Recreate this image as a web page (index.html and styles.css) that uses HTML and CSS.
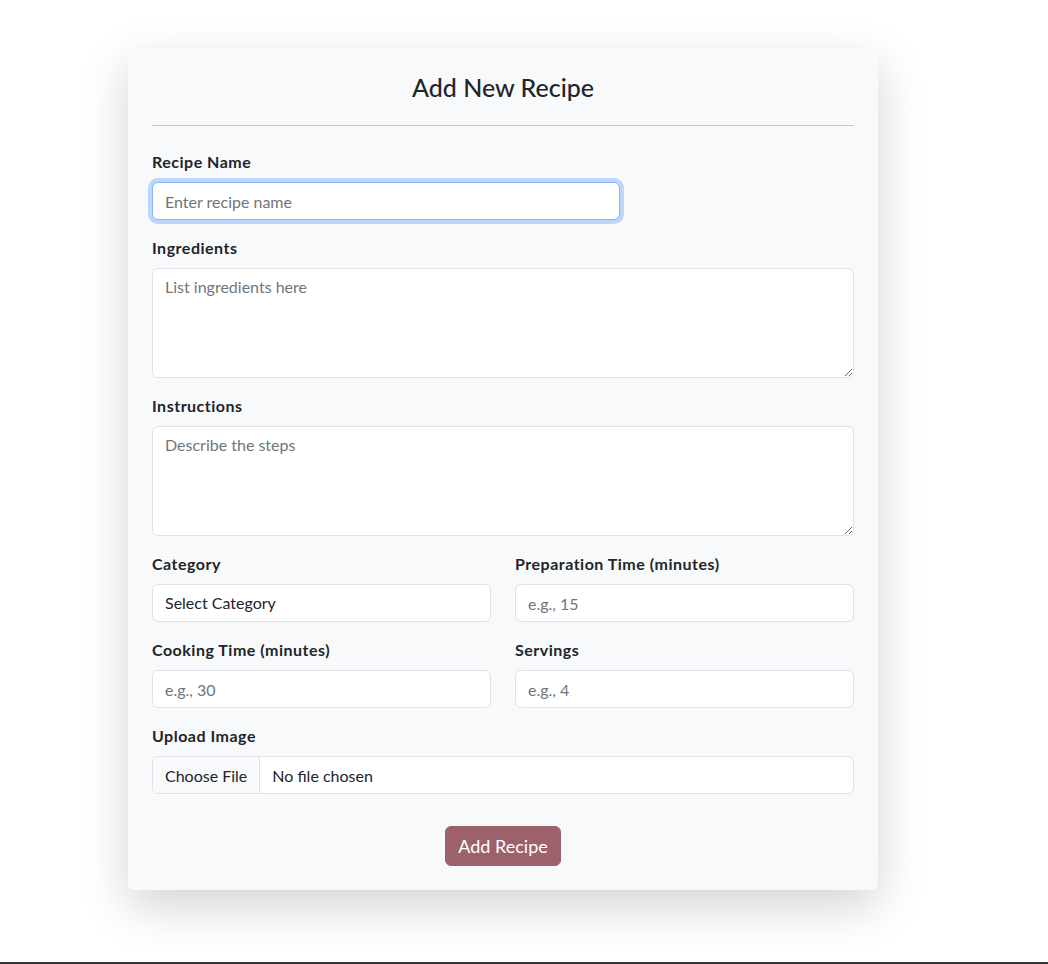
FILE: index.html
```html
<!DOCTYPE html>
<html lang="en">
<head>
<meta charset="utf-8">
<title>Add New Recipe</title>
<link rel="stylesheet" href="styles.css">
</head>
<body>
<main class="page">
  <form class="card">
    <h3 class="card-title">Add New Recipe</h3>
    <hr class="divider">
    <div class="group">
      <label class="label" for="name">Recipe Name</label>
      <input class="control control-focus control-narrow" id="name" type="text" placeholder="Enter recipe name" autofocus>
    </div>
    <div class="group">
      <label class="label" for="ingredients">Ingredients</label>
      <textarea class="control area" id="ingredients" rows="4" placeholder="List ingredients here"></textarea>
    </div>
    <div class="group">
      <label class="label" for="instructions">Instructions</label>
      <textarea class="control area" id="instructions" rows="4" placeholder="Describe the steps"></textarea>
    </div>
    <div class="row">
      <div class="group">
        <label class="label" for="category">Category</label>
        <select class="control select" id="category">
          <option>Select Category</option>
          <option>Breakfast</option>
          <option>Lunch</option>
          <option>Dinner</option>
          <option>Dessert</option>
        </select>
      </div>
      <div class="group">
        <label class="label" for="prep">Preparation Time (minutes)</label>
        <input class="control" id="prep" type="number" placeholder="e.g., 15">
      </div>
    </div>
    <div class="row">
      <div class="group">
        <label class="label" for="cook">Cooking Time (minutes)</label>
        <input class="control" id="cook" type="number" placeholder="e.g., 30">
      </div>
      <div class="group">
        <label class="label" for="servings">Servings</label>
        <input class="control" id="servings" type="number" placeholder="e.g., 4">
      </div>
    </div>
    <div class="group">
      <label class="label" for="image">Upload Image</label>
      <input class="control file" id="image" type="file">
    </div>
    <div class="actions">
      <button class="btn" type="submit">Add Recipe</button>
    </div>
  </form>
</main>
<footer class="footer"></footer>
</body>
</html>
```
FILE: styles.css
```css
* { box-sizing: border-box; }

html, body {
  margin: 0;
  padding: 0;
  background: #ffffff;
  font-family: "Lato", "Noto Sans", sans-serif;
  font-size: 16px;
  line-height: 1.5;
  color: #212529;
}

.page {
  padding-top: 48px;
  padding-bottom: 72px;
}

.card {
  width: 750px;
  margin-left: 128px;
  padding: 24px;
  background: #f8f9fa;
  border-radius: 6px;
  box-shadow: 0 16px 48px rgba(0, 0, 0, 0.175);
}

.card-title {
  margin: 0 0 8px;
  padding-top: 2px;
  font-size: 25px;
  font-weight: 500;
  line-height: 27px;
  text-align: center;
  color: #212529;
}

.divider {
  margin: 24px 0;
  border: 0;
  border-top: 1px solid #c5c6c8;
  height: 0;
}

.group {
  margin-bottom: 16px;
}

.label {
  display: block;
  margin-bottom: 8px;
  font-weight: 700;
  line-height: 24px;
  letter-spacing: 0.5px;
}

.control {
  display: block;
  width: 100%;
  height: 38px;
  padding: 6px 12px;
  font-family: inherit;
  font-size: 16px;
  line-height: 24px;
  color: #212529;
  background: #ffffff;
  border: 1px solid #dee2e6;
  border-radius: 6px;
  outline: none;
}

.control::placeholder {
  color: #6f757b;
  opacity: 1;
}

.control-narrow {
  width: 66.6667%;
}

.control-focus,
.control:focus {
  border-color: #86b7fe;
  box-shadow: 0 0 0 4px rgba(13, 110, 253, 0.25);
}

.area {
  height: 110px;
  resize: vertical;
}

.select {
  appearance: none;
  -webkit-appearance: none;
}

input[type=number]::-webkit-inner-spin-button,
input[type=number]::-webkit-outer-spin-button {
  -webkit-appearance: none;
  margin: 0;
}
input[type=number] { -moz-appearance: textfield; }

.file {
  padding: 0;
  overflow: hidden;
  line-height: 36px;
}

.file::file-selector-button,
.file::-webkit-file-upload-button {
  height: 36px;
  margin: 0 12px 0 0;
  padding: 0 12px;
  font-family: inherit;
  font-size: 16px;
  color: #212529;
  background: #f8f9fa;
  border: 0;
  border-right: 1px solid #dee2e6;
  border-radius: 0;
}

.row {
  display: grid;
  grid-template-columns: 1fr 1fr;
  column-gap: 24px;
}

.actions {
  display: flex;
  justify-content: center;
  padding-top: 16px;
}

.btn {
  height: 40px;
  padding: 0 12px;
  font-family: inherit;
  font-size: 18px;
  line-height: 38px;
  color: #ffffff;
  background: #9c616b;
  border: 1px solid #9c616b;
  border-radius: 6px;
}

.footer {
  height: 40px;
  background: #343434;
}
```
